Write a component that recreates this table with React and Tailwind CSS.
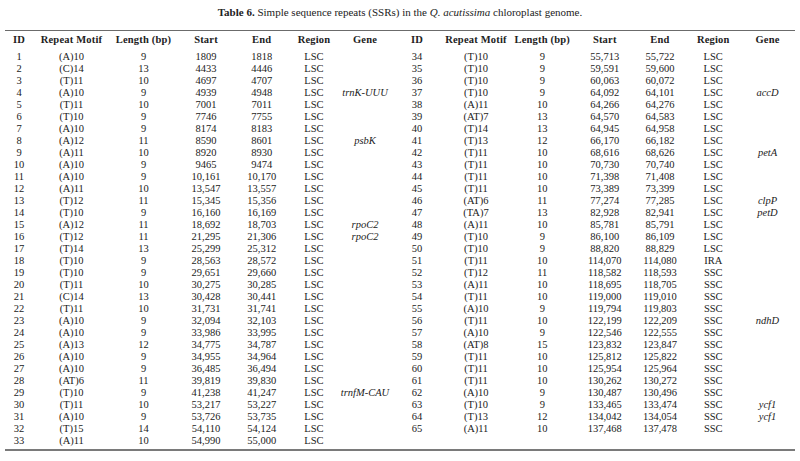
const left = [
  [1, "(A)10", 9, "1809", "1818", "LSC", ""],
  [2, "(C)14", 13, "4433", "4446", "LSC", ""],
  [3, "(T)11", 10, "4697", "4707", "LSC", ""],
  [4, "(A)10", 9, "4939", "4948", "LSC", "trnK-UUU"],
  [5, "(T)11", 10, "7001", "7011", "LSC", ""],
  [6, "(T)10", 9, "7746", "7755", "LSC", ""],
  [7, "(A)10", 9, "8174", "8183", "LSC", ""],
  [8, "(A)12", 11, "8590", "8601", "LSC", "psbK"],
  [9, "(A)11", 10, "8920", "8930", "LSC", ""],
  [10, "(A)10", 9, "9465", "9474", "LSC", ""],
  [11, "(A)10", 9, "10,161", "10,170", "LSC", ""],
  [12, "(A)11", 10, "13,547", "13,557", "LSC", ""],
  [13, "(T)12", 11, "15,345", "15,356", "LSC", ""],
  [14, "(T)10", 9, "16,160", "16,169", "LSC", ""],
  [15, "(A)12", 11, "18,692", "18,703", "LSC", "rpoC2"],
  [16, "(T)12", 11, "21,295", "21,306", "LSC", "rpoC2"],
  [17, "(T)14", 13, "25,299", "25,312", "LSC", ""],
  [18, "(T)10", 9, "28,563", "28,572", "LSC", ""],
  [19, "(T)10", 9, "29,651", "29,660", "LSC", ""],
  [20, "(T)11", 10, "30,275", "30,285", "LSC", ""],
  [21, "(C)14", 13, "30,428", "30,441", "LSC", ""],
  [22, "(T)11", 10, "31,731", "31,741", "LSC", ""],
  [23, "(A)10", 9, "32,094", "32,103", "LSC", ""],
  [24, "(A)10", 9, "33,986", "33,995", "LSC", ""],
  [25, "(A)13", 12, "34,775", "34,787", "LSC", ""],
  [26, "(A)10", 9, "34,955", "34,964", "LSC", ""],
  [27, "(A)10", 9, "36,485", "36,494", "LSC", ""],
  [28, "(AT)6", 11, "39,819", "39,830", "LSC", ""],
  [29, "(T)10", 9, "41,238", "41,247", "LSC", "trnfM-CAU"],
  [30, "(T)11", 10, "53,217", "53,227", "LSC", ""],
  [31, "(A)10", 9, "53,726", "53,735", "LSC", ""],
  [32, "(T)15", 14, "54,110", "54,124", "LSC", ""],
  [33, "(A)11", 10, "54,990", "55,000", "LSC", ""],
];

const right = [
  [34, "(T)10", 9, "55,713", "55,722", "LSC", ""],
  [35, "(T)10", 9, "59,591", "59,600", "LSC", ""],
  [36, "(T)10", 9, "60,063", "60,072", "LSC", ""],
  [37, "(T)10", 9, "64,092", "64,101", "LSC", "accD"],
  [38, "(A)11", 10, "64,266", "64,276", "LSC", ""],
  [39, "(AT)7", 13, "64,570", "64,583", "LSC", ""],
  [40, "(T)14", 13, "64,945", "64,958", "LSC", ""],
  [41, "(T)13", 12, "66,170", "66,182", "LSC", ""],
  [42, "(T)11", 10, "68,616", "68,626", "LSC", "petA"],
  [43, "(T)11", 10, "70,730", "70,740", "LSC", ""],
  [44, "(T)11", 10, "71,398", "71,408", "LSC", ""],
  [45, "(T)11", 10, "73,389", "73,399", "LSC", ""],
  [46, "(AT)6", 11, "77,274", "77,285", "LSC", "clpP"],
  [47, "(TA)7", 13, "82,928", "82,941", "LSC", "petD"],
  [48, "(A)11", 10, "85,781", "85,791", "LSC", ""],
  [49, "(T)10", 9, "86,100", "86,109", "LSC", ""],
  [50, "(T)10", 9, "88,820", "88,829", "LSC", ""],
  [51, "(T)11", 10, "114,070", "114,080", "IRA", ""],
  [52, "(T)12", 11, "118,582", "118,593", "SSC", ""],
  [53, "(A)11", 10, "118,695", "118,705", "SSC", ""],
  [54, "(T)11", 10, "119,000", "119,010", "SSC", ""],
  [55, "(A)10", 9, "119,794", "119,803", "SSC", ""],
  [56, "(T)11", 10, "122,199", "122,209", "SSC", "ndhD"],
  [57, "(A)10", 9, "122,546", "122,555", "SSC", ""],
  [58, "(AT)8", 15, "123,832", "123,847", "SSC", ""],
  [59, "(T)11", 10, "125,812", "125,822", "SSC", ""],
  [60, "(T)11", 10, "125,954", "125,964", "SSC", ""],
  [61, "(T)11", 10, "130,262", "130,272", "SSC", ""],
  [62, "(A)10", 9, "130,487", "130,496", "SSC", ""],
  [63, "(T)10", 9, "133,465", "133,474", "SSC", "ycf1"],
  [64, "(T)13", 12, "134,042", "134,054", "SSC", "ycf1"],
  [65, "(A)11", 10, "137,468", "137,478", "SSC", ""],
];

const headers = ["ID", "Repeat Motif", "Length (bp)", "Start", "End", "Region", "Gene"];

const cols =
  "grid grid-cols-[28px_77px_67px_58px_53.5px_51px_51px_53px_65px_67.5px_57.5px_53px_53.5px_55px]";

function Cells({ row }) {
  if (!row) return headers.map((_, i) => <div key={i} />);
  return row.map((v, i) => (
    <div key={i} className={i === 6 ? "italic text-center" : "text-center"}>
      {v}
    </div>
  ));
}

export default function App() {
  return (
    <div
      className="w-[800px] h-[461px] bg-white text-[#222] px-[5px] pt-[5px]"
      style={{ fontFamily: '"Liberation Serif", "Times New Roman", serif' }}
    >
      <div className="text-center text-[11px] leading-[15px] h-[25px]">
        <span className="font-bold">Table 6.</span> Simple sequence repeats (SSRs) in the{" "}
        <span className="italic">Q. acutissima</span> chloroplast genome.
      </div>
      <div className="border-t border-[#6b6b6b] border-b-2 border-b-[#7a7a7a] text-[10.5px] pb-[2px]">
        <div className={`${cols} h-[18px] items-center font-bold tracking-[0.2px]`}>
          {headers.concat(headers).map((h, i) => (
            <div key={i} className="text-center">
              {h}
            </div>
          ))}
        </div>
        <div className="pt-[2px]">
          {left.map((r, i) => (
            <div key={i} className={`${cols} h-[12px] leading-[12px]`}>
              <Cells row={r} />
              <Cells row={right[i]} />
            </div>
          ))}
        </div>
      </div>
    </div>
  );
}
